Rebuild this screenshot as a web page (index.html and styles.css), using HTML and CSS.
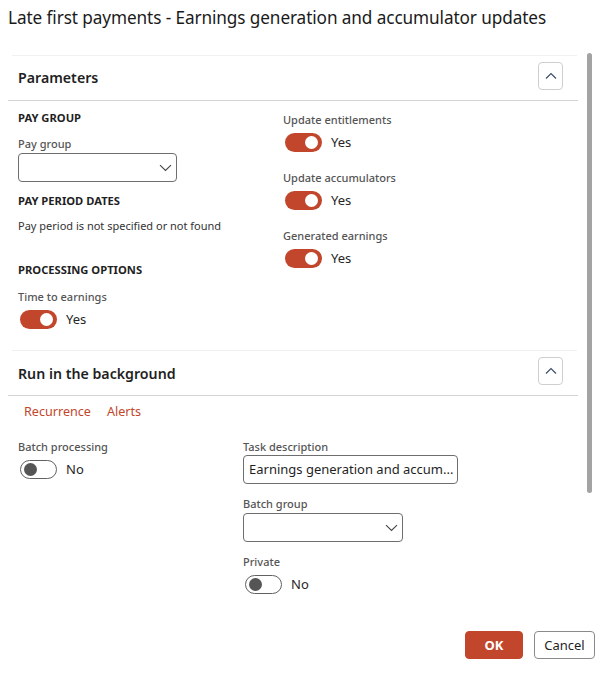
FILE: index.html
```html
<!DOCTYPE html>
<html lang="en">
<head>
<meta charset="utf-8">
<title>Late first payments</title>
<link rel="stylesheet" href="styles.css">
</head>
<body>
<div class="dialog">
  <h1 class="title">Late first payments - Earnings generation and accumulator updates</h1>

  <section class="fasttab">
    <div class="fasttab-header">
      <h2>Parameters</h2>
      <button class="collapse" aria-label="Collapse">
        <svg width="12" height="8" viewBox="0 0 12 8"><path d="M1 6.5 L6 1.5 L11 6.5" fill="none" stroke="#3d4f66" stroke-width="1.2"/></svg>
      </button>
    </div>
    <div class="fasttab-body params">
      <div class="col col-left">
        <div class="group-title gt-first">PAY GROUP</div>
        <div class="label lbl-paygroup">Pay group</div>
        <div class="select sel-paygroup">
          <svg class="chev" width="13" height="8" viewBox="0 0 13 8"><path d="M1 1.2 L6.5 6.5 L12 1.2" fill="none" stroke="#444" stroke-width="1.1"/></svg>
        </div>
        <div class="group-title gt-period">PAY PERIOD DATES</div>
        <div class="text">Pay period is not specified or not found</div>
        <div class="group-title gt-proc">PROCESSING OPTIONS</div>
        <div class="label lbl-time">Time to earnings</div>
        <div class="toggle-row"><span class="toggle on"><span class="knob"></span></span><span class="tval">Yes</span></div>
      </div>
      <div class="col col-right">
        <div class="label lbl-r1">Update entitlements</div>
        <div class="toggle-row"><span class="toggle on"><span class="knob"></span></span><span class="tval">Yes</span></div>
        <div class="label lbl-r">Update accumulators</div>
        <div class="toggle-row"><span class="toggle on"><span class="knob"></span></span><span class="tval">Yes</span></div>
        <div class="label lbl-r">Generated earnings</div>
        <div class="toggle-row"><span class="toggle on"><span class="knob"></span></span><span class="tval">Yes</span></div>
      </div>
    </div>
  </section>

  <section class="fasttab fasttab-2">
    <div class="fasttab-header">
      <h2>Run in the background</h2>
      <button class="collapse" aria-label="Collapse">
        <svg width="12" height="8" viewBox="0 0 12 8"><path d="M1 6.5 L6 1.5 L11 6.5" fill="none" stroke="#3d4f66" stroke-width="1.2"/></svg>
      </button>
    </div>
    <div class="fasttab-body batch">
      <div class="tabs"><span class="tab">Recurrence</span><span class="tab">Alerts</span></div>
      <div class="batch-cols">
        <div class="col col-b-left">
          <div class="label">Batch processing</div>
          <div class="toggle-row"><span class="toggle off"><span class="knob"></span></span><span class="tval">No</span></div>
        </div>
        <div class="col col-b-right">
          <div class="label">Task description</div>
          <div class="input">Earnings generation and accum...</div>
          <div class="label lbl-b">Batch group</div>
          <div class="select sel-batch">
            <svg class="chev" width="13" height="8" viewBox="0 0 13 8"><path d="M1 1.2 L6.5 6.5 L12 1.2" fill="none" stroke="#444" stroke-width="1.1"/></svg>
          </div>
          <div class="label lbl-b">Private</div>
          <div class="toggle-row"><span class="toggle off"><span class="knob"></span></span><span class="tval">No</span></div>
        </div>
      </div>
    </div>
  </section>

  <div class="footer">
    <button class="btn btn-primary">OK</button>
    <button class="btn btn-secondary">Cancel</button>
  </div>

  <div class="scrollbar"></div>
</div>
</body>
</html>
```

FILE: styles.css
```css
* { box-sizing: border-box; }
html, body { margin: 0; padding: 0; background: #fff; }
body {
  font-family: "Noto Sans", "Open Sans", sans-serif;
  color: #262626;
  width: 599px;
  height: 673px;
  overflow: hidden;
}
.dialog { position: relative; width: 599px; height: 673px; }

.title {
  margin: 0;
  padding: 6px 0 0 8px;
  height: 55px;
  font-size: 17.2px;
  line-height: 24px;
  font-weight: 400;
  color: #1a1a1a;
  letter-spacing: -0.1px;
}

.fasttab {
  margin-left: 12px;
  width: 565px;
  border-top: 1px solid #f1f1f1;
}
.fasttab-header {
  display: flex;
  justify-content: space-between;
  align-items: flex-start;
  height: 45px;
  margin-left: -4px;
  margin-right: -1px;
  border-bottom: 1px solid #d4d4d4;
  padding: 0 15px 0 10px;
}
.fasttab-header h2 {
  margin: 0;
  font-size: 14.2px;
  font-weight: 600;
  line-height: 20px;
  padding-top: 12px;
  color: #1f1f1f;
}
.fasttab-2 .fasttab-header h2 { padding-top: 13px; }
.collapse {
  margin-top: 6px;
  width: 25px;
  height: 28px;
  border: 1px solid #cfcfcf;
  border-radius: 4px;
  background: #fff;
  padding: 0;
  display: flex;
  align-items: center;
  justify-content: center;
}
.fasttab-body { margin-left: -4px; }

.params {
  display: flex;
  height: 249px;
  padding-left: 10px;
}
.col-left { width: 265px; }
.col-right { flex: 1; }

.group-title {
  font-size: 11.2px;
  font-weight: 700;
  line-height: 16px;
  color: #1f1f1f;
}
.gt-first { margin-top: 9px; }
.gt-period { margin-top: 11px; }
.gt-proc { margin-top: 28px; }

.label {
  font-size: 11px;
  line-height: 16px;
  font-weight: 500;
  color: #555;
}
.lbl-paygroup { margin-top: 10px; }
.lbl-time { margin-top: 11px; }
.lbl-r1 { margin-top: 11px; }
.lbl-r { margin-top: 18px; }

.text {
  margin-top: 9px;
  font-size: 11px;
  line-height: 16px;
  color: #333;
}

.select {
  position: relative;
  margin-top: 1px;
  height: 29px;
  border: 1px solid #6e6e6e;
  border-radius: 4px;
  background: #fff;
}
.sel-paygroup { width: 159px; }
.sel-batch { width: 160px; }
.chev { position: absolute; right: 4px; top: 10px; }

.toggle-row {
  display: flex;
  align-items: center;
  height: 20px;
  margin-top: 4px;
  padding-left: 2px;
}
.toggle {
  position: relative;
  width: 37px;
  height: 19px;
  border-radius: 10px;
  display: inline-block;
  flex: none;
}
.toggle.on { background: #c2462b; }
.toggle.off { background: #fff; border: 1px solid #616161; }
.knob {
  position: absolute;
  top: 3px;
  width: 13px;
  height: 13px;
  border-radius: 50%;
}
.toggle.on .knob { background: #fff; right: 4px; }
.toggle.off .knob { background: #555; left: 3px; top: 2px; }
.tval {
  margin-left: 9px;
  font-size: 13px;
  line-height: 20px;
  color: #262626;
}

.batch { padding-left: 10px; }
.tabs {
  display: flex;
  gap: 16px;
  padding-left: 6px;
  margin-top: 7px;
  line-height: 18px;
}
.tab { font-size: 12.6px; color: #c2462b; }
.batch-cols { display: flex; margin-top: 18px; }
.col-b-left { width: 225px; }
.col-b-right { flex: 1; }
.input {
  height: 29px;
  width: 215px;
  border: 1px solid #6e6e6e;
  border-radius: 4px;
  padding: 0 5px;
  font-size: 13px;
  line-height: 27px;
  color: #1f1f1f;
  white-space: nowrap;
  overflow: hidden;
}
.lbl-b { margin-top: 12px; }

.footer {
  display: flex;
  justify-content: flex-end;
  gap: 11px;
  padding-right: 4px;
  margin-top: 37px;
}
.btn {
  height: 28px;
  border-radius: 4px;
  font-family: "Noto Sans", "Open Sans", sans-serif;
  font-size: 13px;
  padding: 0;
}
.btn-primary {
  width: 58px;
  background: #c2462b;
  border: 1px solid #c2462b;
  color: #fff;
  font-weight: 700;
}
.btn-secondary {
  width: 61px;
  background: #fff;
  border: 1px solid #8a8a8a;
  color: #1f1f1f;
}

.scrollbar {
  position: absolute;
  left: 587px;
  top: 53px;
  width: 5px;
  height: 440px;
  border-radius: 3px;
  background: #a3a3a3;
}
```
